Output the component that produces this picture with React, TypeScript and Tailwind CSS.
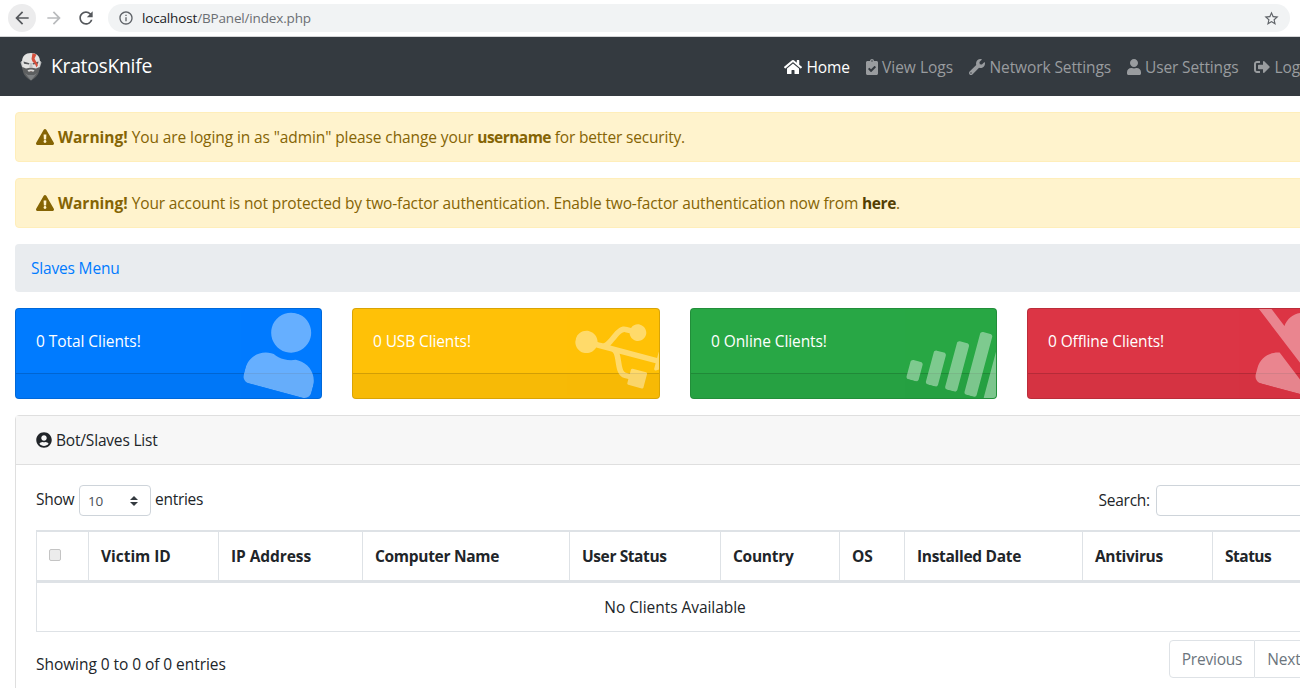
import type { ReactNode } from "react";
import {
  FaHome, FaClipboardCheck, FaWrench, FaUser, FaSignOutAlt, FaExclamationTriangle,
  FaUserCircle, FaUsb, FaSignal, FaUserSlash,
} from "react-icons/fa";
import { MdArrowBack, MdArrowForward, MdRefresh, MdInfoOutline, MdStarBorder } from "react-icons/md";

function BrowserBar() {
  return (
    <div className="flex h-[37px] w-[1300px] items-center border-b border-[#d4d5d7] bg-white pl-2">
      <div className="flex size-7 items-center justify-center rounded-full bg-[#ececed]">
        <MdArrowBack className="size-5 text-[#55585c]" />
      </div>
      <MdArrowForward className="ml-2 size-5 text-[#b9bbbd]" />
      <MdRefresh className="ml-3 size-5 text-[#55585c]" />
      <div className="ml-3 flex h-7 w-[1182px] items-center rounded-full bg-[#f1f3f4] pl-2.5 pr-2.5">
        <MdInfoOutline className="size-4 text-[#5f6368]" />
        <div className="ml-2 flex-1 text-[13.5px] tracking-[-0.16px] text-[#6b6f73]">
          <span className="text-[#202124]">localhost</span>/BPanel/index.php
        </div>
        <MdStarBorder className="size-[17px] text-[#5f6368]" />
      </div>
    </div>
  );
}

function Logo() {
  return (
    <svg viewBox="0 0 22 30" className="h-[30px] w-[22px]">
      <path d="M1.5 9 L.5 10.500 L2 15 L4 16 V9 Z M20.500 9 L21.500 10.500 L20 15 L18 16 V9 Z" fill="#b9bbbc" />
      <path d="M2 10 C2 4 5.500 1 11 1 S20 4 20 10 L19 18 H3 Z" fill="#e3e3e2" />
      <path d="M2.500 15 L6 16.500 L11 15.500 L16 16.500 L19.500 15 C19.500 21 17.500 25 11 28.500 C4.500 25 2.500 21 2.500 15 Z" fill="#5d5f60" />
      <path d="M5 21 C7 24 9 26 11 28.500 C13 26 15 24 17 21 L14 23 H8 Z" fill="#7d8082" />
      <path d="M3.500 9.500 L9.500 11.200 L9 12.600 L4 11.800 Z M18.500 9.500 L12.500 11.200 L13 12.600 L18 11.800 Z" fill="#55575a" />
      <path d="M10 11 L9.300 15.500 H12.700 L12 11 Z" fill="#c2c2c1" />
      <path d="M7.500 18.500 C9 17.200 13 17.200 14.500 18.500 L13.300 19.800 H8.700 Z" fill="#d8d8d7" />
      <path d="M9 19 H13 L11 19.800 Z" fill="#5b4a48" />
      <path d="M12.500 1.200 L16.500 2.500 L14.500 6.500 L15.500 8.500 L18 13 L16.500 15.500 L15 12 L12.500 9.500 L11.500 7 Z" fill="#d5503d" />
    </svg>
  );
}

function NavLink({ box, iconBox, icon, label, active = false }: { box: string; iconBox: string; icon: ReactNode; label: string; active?: boolean }) {
  return (
    <a className={`flex shrink-0 items-center whitespace-nowrap ${box} ${active ? "text-white" : "text-[#999c9f]"}`}>
      <span className={`shrink-0 ${iconBox}`}>{icon}</span>
      {label}
    </a>
  );
}

function Navbar() {
  return (
    <nav className="flex h-[59px] w-[1350px] items-center bg-[#343a40] pl-5 pt-px">
      <Logo />
      <span className="ml-[9px] w-[733px] pb-0.5 text-[19.375px] tracking-[-0.3px] text-white">KratosKnife</span>
      <NavLink box="w-[81px]" iconBox="w-[22.500px]" active icon={<FaHome className="h-4 w-[18px]" />} label="Home" />
      <NavLink box="w-[104px] tracking-[0px]" iconBox="w-[17px]" icon={<FaClipboardCheck className="ml-px h-4 w-3" />} label="View Logs" />
      <NavLink box="w-[158px] tracking-[-0.1px]" iconBox="w-[20.500px]" icon={<FaWrench className="size-4" />} label="Network Settings" />
      <NavLink box="w-[127px]" iconBox="w-[18px]" icon={<FaUser className="h-4 w-3.5" />} label="User Settings" />
      <NavLink box="w-[80px]" iconBox="w-[20.500px]" icon={<FaSignOutAlt className="size-4" />} label="Logout" />
    </nav>
  );
}

function Alert({ children }: { children: ReactNode }) {
  return (
    <div className="mb-4 flex h-[50px] items-center rounded border border-[#ffeeba] bg-[#fff3cd] pl-5 text-[#856404]">
      <FaExclamationTriangle className="mr-1 h-4 w-[18px] shrink-0" />
      <div className="flex-1 whitespace-nowrap">
        <b className="mr-1 tracking-[0px]">Warning!</b>
        {children}
      </div>
      <span className="mr-[21px] pt-1 text-2xl font-bold leading-none text-[#b8a468]">×</span>
    </div>
  );
}

function StatCard({ label, colors, icon, textStyle }: { label: string; colors: string; icon: ReactNode; textStyle: string }) {
  return (
    <div className={`relative flex h-[91px] flex-col overflow-hidden rounded border border-black/15 text-white ${colors}`}>
      <div className={`h-16 px-5 pt-5 leading-6 ${textStyle}`}>{label}</div>
      <div className="h-[25px] border-t border-black/15 bg-black/[0.03]" />
      <div className="absolute -right-[15px] top-[2.500px] flex h-20 w-[100px] rotate-[15deg] items-center justify-center opacity-40">{icon}</div>
    </div>
  );
}

const columns = [
  { name: "Victim ID", cell: "w-[130px] tracking-[-0.03px]" },
  { name: "IP Address", cell: "w-[144px] tracking-[-0.08px]" },
  { name: "Computer Name", cell: "w-[207px] tracking-[-0.3px]" },
  { name: "User Status", cell: "w-[151px] tracking-[-0.4px]" },
  { name: "Country", cell: "w-[119px] tracking-[-0.27px]" },
  { name: "OS", cell: "w-[65px] tracking-[-0.2px]" },
  { name: "Installed Date", cell: "w-[178px] tracking-[-0.3px]" },
  { name: "Antivirus", cell: "w-[130px] tracking-[-0.33px]" },
  { name: "Status", cell: "w-[101px] tracking-[-0.5px]" },
];

function ClientTable() {
  return (
    <div className="mt-[14px] w-[1278px] border border-[#dee2e6]">
      <div className="flex h-[52px] border-b-[3px] border-t border-[#dee2e6] font-bold">
        <div className="w-[51px] pl-3 pt-[17px]">
          <div className="size-3 rounded-[2px] border border-[#c4c4c4] bg-[#ececec]" />
        </div>
        {columns.map((c) => (
          <div key={c.name} className={`flex items-center whitespace-nowrap border-l border-[#dee2e6] pl-3 ${c.cell}`}>
            {c.name}
          </div>
        ))}
      </div>
      <div className="flex h-12 items-center justify-center tracking-[-0.05px]">No Clients Available</div>
    </div>
  );
}

function ListPanel() {
  return (
    <section className="mt-4 h-[300px] rounded border border-[#dfdfdf] bg-white">
      <header className="flex h-[49px] items-center border-b border-[#dfdfdf] bg-[#f7f7f7] pl-5 tracking-[-0.18px]">
        <FaUserCircle className="mr-[4px] size-4" />
        Bot/Slaves List
      </header>
      <div className="px-5 pt-5">
        <div className="flex h-[31px] items-center">
          <span className="w-[43px] pb-1 tracking-[-0.3px]">Show</span>
          <div className="flex h-[31px] w-[72px] items-center justify-between rounded border border-[#ced4da] pl-2 pr-3 text-[13.5px] text-[#495057]">
            10
            <svg viewBox="0 0 8 10" className="h-2.5 w-2 fill-[#343a40]">
              <path d="M4 0 L8 4 H0 Z M0 6 H8 L4 10 Z" />
            </svg>
          </div>
          <span className="ml-1 w-[943.500px] pb-1 tracking-[-0.28px]">entries</span>
          <span className="w-[57.500px] pb-0.5 tracking-[-0.25px]">Search:</span>
          <div className="h-[31px] w-[158px] rounded border border-[#ced4da]" />
        </div>
        <ClientTable />
        <div className="mt-2 flex h-[38px]">
          <span className="w-[1133px] pt-3 tracking-[-0.06px]">Showing 0 to 0 of 0 entries</span>
          <div className="flex w-[86px] items-center justify-center rounded-l border border-[#dee2e6] tracking-[-0.2px] text-[#6c757d]">Previous</div>
          <div className="flex w-[59px] items-center justify-center rounded-r border border-l-0 border-[#dee2e6] text-[#6c757d]">Next</div>
        </div>
      </div>
    </section>
  );
}

export default function App() {
  return (
    <div className="h-[688px] w-[1300px] overflow-hidden bg-white font-['Open_Sans','Noto_Sans',sans-serif] text-[15.500px] leading-6 tracking-[-0.13px] text-[#212529]">
      <BrowserBar />
      <Navbar />
      <main className="w-[1350px] px-[15px] pt-4">
        <Alert>
          <span className="tracking-[-0.1px]">You are loging in as "admin" please change your </span>
          <b className="tracking-[-0.55px]">username</b>
          <span className="tracking-[-0.18px]"> for better security.</span>
        </Alert>
        <Alert>
          <span className="tracking-[-0.14px]">
            Your account is not protected by two-factor authentication. Enable two-factor authentication now from{" "}
          </span>
          <b className="tracking-[-0.4px] text-[#533f03]">here</b>.
        </Alert>
        <div className="mb-4 flex h-12 items-center rounded bg-[#e9ecef] px-4 tracking-[-0.18px] text-[#007bff]">Slaves Menu</div>
        <div className="grid grid-cols-[307px_308px_307px_307px] gap-x-[30px]">
          <StatCard label="0 Total Clients!" colors="bg-[#007bff]" textStyle="tracking-[-0.06px]" icon={<FaUser className="h-20 w-[70px]" />} />
          <StatCard label="0 USB Clients!" colors="bg-[#ffc107]" textStyle="tracking-[-0.12px]" icon={<FaUsb className="h-20 w-[100px]" />} />
          <StatCard label="0 Online Clients!" colors="bg-[#28a745]" textStyle="tracking-[-0.09px]" icon={<FaSignal className="h-20 w-[100px]" />} />
          <StatCard label="0 Offline Clients!" colors="bg-[#dc3545]" textStyle="tracking-[-0.12px]" icon={<FaUserSlash className="h-20 w-[100px]" />} />
        </div>
        <ListPanel />
      </main>
    </div>
  );
}
